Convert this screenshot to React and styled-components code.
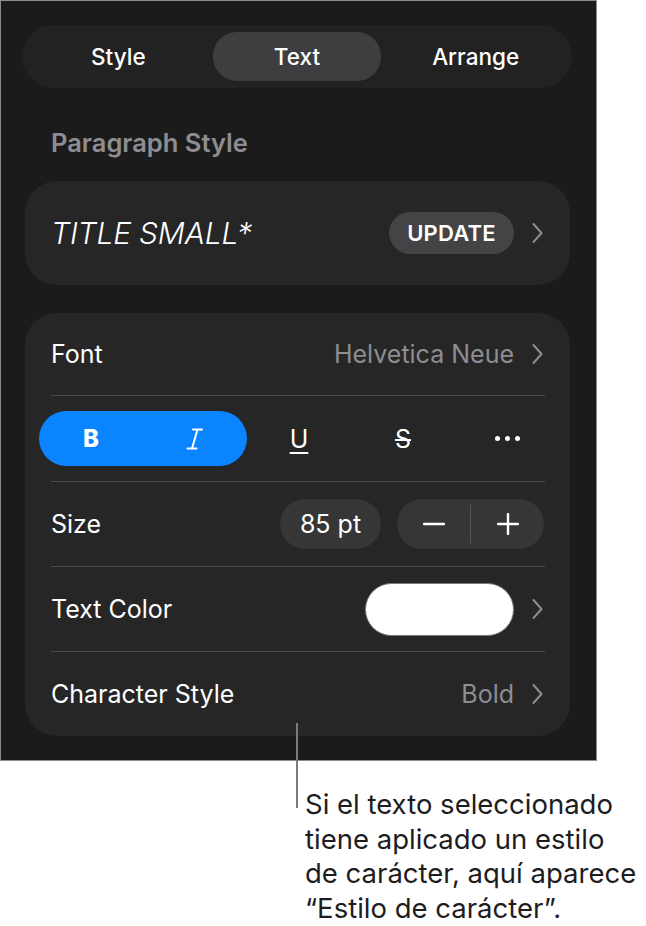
import styled, { createGlobalStyle } from "styled-components";

const GlobalStyle = createGlobalStyle`
    body {
        margin: 0;
        background: #FFFFFF;
        font-family: 'Inter', 'Noto Sans', sans-serif;
        -webkit-font-smoothing: antialiased;
    }
`;

function Chevron() {
    return (
        <svg width="13" height="22" viewBox="0 0 13 22" fill="none">
            <path d="M2.5 2 L10.5 11 L2.5 20" stroke="#8D8D92" strokeWidth="2" strokeLinecap="round" strokeLinejoin="round" />
        </svg>
    );
}

function ItalicIcon() {
    return (
        <svg width="18" height="24" viewBox="0 0 18 24" fill="none">
            <path d="M7 2.5 H16 M1.5 21.5 H10.5 M11.5 2.5 L6 21.5" stroke="#FFFFFF" strokeWidth="2" strokeLinecap="round" />
        </svg>
    );
}

export default function App() {
    return (
        <>
            <GlobalStyle />
            <Panel>
                <Segmented>
                    <Segment>Style</Segment>
                    <Segment active>Text</Segment>
                    <Segment>Arrange</Segment>
                </Segmented>

                <SectionLabel>Paragraph Style</SectionLabel>

                <TitleCard>
                    <StyleName>TITLE SMALL*</StyleName>
                    <Trailing>
                        <UpdateButton>UPDATE</UpdateButton>
                        <Chevron />
                    </Trailing>
                </TitleCard>

                <Card>
                    <Row height={82}>
                        <Label>Font</Label>
                        <Trailing>
                            <Value>Helvetica Neue</Value>
                            <Chevron />
                        </Trailing>
                    </Row>
                    <Divider />
                    <FormatRow>
                        <ActiveGroup>
                            <FormatButton><Bold>B</Bold></FormatButton>
                            <FormatButton><ItalicIcon /></FormatButton>
                        </ActiveGroup>
                        <FormatButton><Under>U</Under></FormatButton>
                        <FormatButton><Strike>S</Strike></FormatButton>
                        <FormatButton><Dots><i /><i /><i /></Dots></FormatButton>
                    </FormatRow>
                    <Divider />
                    <Row height={84}>
                        <Label>Size</Label>
                        <Trailing gap={16}>
                            <SizePill>85 pt</SizePill>
                            <Stepper>
                                <StepButton>
                                    <svg width="22" height="22" viewBox="0 0 22 22"><path d="M1 11 H21" stroke="#FFFFFF" strokeWidth="2.4" strokeLinecap="round" /></svg>
                                </StepButton>
                                <StepDivider />
                                <StepButton>
                                    <svg width="22" height="22" viewBox="0 0 22 22"><path d="M1 11 H21 M11 1 V21" stroke="#FFFFFF" strokeWidth="2.4" strokeLinecap="round" /></svg>
                                </StepButton>
                            </Stepper>
                        </Trailing>
                    </Row>
                    <Divider />
                    <Row height={84}>
                        <Label>Text Color</Label>
                        <Trailing>
                            <Swatch color="#FFFFFF" />
                            <Chevron />
                        </Trailing>
                    </Row>
                    <Divider />
                    <Row height={84}>
                        <Label>Character Style</Label>
                        <Trailing>
                            <Value>Bold</Value>
                            <Chevron />
                        </Trailing>
                    </Row>
                </Card>
            </Panel>

            <Callout>
                <Leader />
                Si el texto seleccionado<br />
                tiene aplicado un estilo<br />
                de carácter, aquí aparece<br />
                “Estilo de carácter”.
            </Callout>
        </>
    );
}

const Panel = styled.div`
    width: 597px;
    height: 761px;
    box-sizing: border-box;
    border: 1px solid #8C8C8C;
    background: #1B1B1B;
    padding: 24px 24px 0 21px;
    display: flex;
    flex-direction: column;
`;

const Segmented = styled.div`
    height: 63px;
    box-sizing: border-box;
    border-radius: 32px;
    background: #222222;
    padding: 7px;
    display: grid;
    grid-template-columns: repeat(3, 1fr);
`;

const Segment = styled.div`
    margin: 0 5px;
    border-radius: 24px;
    display: flex;
    align-items: center;
    justify-content: center;
    font-size: 22.5px;
    font-weight: 500;
    color: #FFFFFF;
    background: ${p => p.active ? "#3E3E40" : "transparent"};
`;

const SectionLabel = styled.div`
    padding: 41px 0 0 29px;
    margin-bottom: 24px;
    height: 28px;
    line-height: 28px;
    font-size: 25.5px;
    font-weight: 600;
    color: #8D8D92;
`;

const TitleCard = styled.div`
    margin: 0 2px 0 3px;
    height: 104px;
    box-sizing: border-box;
    border-radius: 32px;
    background: #262626;
    padding: 0 26px 0 26px;
    display: flex;
    align-items: center;
    justify-content: space-between;
`;

const StyleName = styled.div`
    font-size: 30px;
    font-style: italic;
    font-weight: 300;
    color: #FFFFFF;
    letter-spacing: -0.2px;
`;

const Trailing = styled.div`
    display: flex;
    align-items: center;
    gap: ${p => p.gap ?? 17}px;
`;

const UpdateButton = styled.div`
    width: 125px;
    height: 42px;
    border-radius: 21px;
    background: #444446;
    display: flex;
    align-items: center;
    justify-content: center;
    font-size: 22px;
    font-weight: 600;
    color: #FFFFFF;
    letter-spacing: 0.2px;
`;

const Card = styled.div`
    margin: 28px 2px 0 3px;
    border-radius: 32px;
    background: #262626;
    padding: 0 26px 0 26px;
    display: flex;
    flex-direction: column;
`;

const Row = styled.div`
    height: ${p => p.height}px;
    display: flex;
    align-items: center;
    justify-content: space-between;
`;

const Label = styled.div`
    font-size: 25px;
    color: #FFFFFF;
`;

const Value = styled.div`
    font-size: 25px;
    color: #8D8D92;
`;

const Divider = styled.div`
    height: 1px;
    background: #4A4A4A;
    margin-right: -1px;
`;

const FormatRow = styled.div`
    height: 85px;
    margin: 0 -13px 0 -12px;
    display: grid;
    grid-template-columns: repeat(5, 104px);
    align-items: center;
`;

const ActiveGroup = styled.div`
    grid-column: span 2;
    height: 55px;
    border-radius: 28px;
    background: #0A84FF;
    display: grid;
    grid-template-columns: repeat(2, 1fr);
`;

const FormatButton = styled.div`
    height: 55px;
    display: flex;
    align-items: center;
    justify-content: center;
    color: #FFFFFF;
`;

const Bold = styled.span`
    font-size: 24px;
    font-weight: 800;
`;

const Under = styled.span`
    font-size: 25px;
    text-decoration: underline;
    text-underline-offset: 4px;
    text-decoration-thickness: 2px;
`;

const Strike = styled.span`
    font-size: 25px;
    text-decoration: line-through;
    text-decoration-thickness: 2px;
`;

const Dots = styled.span`
    display: flex;
    gap: 5px;
    & > i {
        width: 5px;
        height: 5px;
        border-radius: 50%;
        background: #FFFFFF;
    }
`;

const SizePill = styled.div`
    width: 101px;
    height: 50px;
    border-radius: 25px;
    background: #363636;
    display: flex;
    align-items: center;
    justify-content: center;
    font-size: 25px;
    color: #FFFFFF;
`;

const Stepper = styled.div`
    width: 147px;
    height: 50px;
    border-radius: 25px;
    background: #363636;
    display: flex;
    align-items: center;
`;

const StepButton = styled.div`
    flex: 1;
    display: flex;
    align-items: center;
    justify-content: center;
`;

const StepDivider = styled.div`
    width: 1px;
    height: 38px;
    background: #555555;
`;

const Swatch = styled.div`
    width: 149px;
    height: 53px;
    box-sizing: border-box;
    border-radius: 27px;
    border: 1px solid #7A7A7A;
    background: ${p => p.color};
`;

const Callout = styled.div`
    position: relative;
    padding: 26px 0 0 305px;
    font-size: 27.5px;
    line-height: 34.5px;
    color: #1D1D1F;
    white-space: nowrap;
`;

const Leader = styled.div`
    position: absolute;
    left: 296px;
    top: -38px;
    width: 2px;
    height: 85px;
    background: #7C7C7C;
`;
